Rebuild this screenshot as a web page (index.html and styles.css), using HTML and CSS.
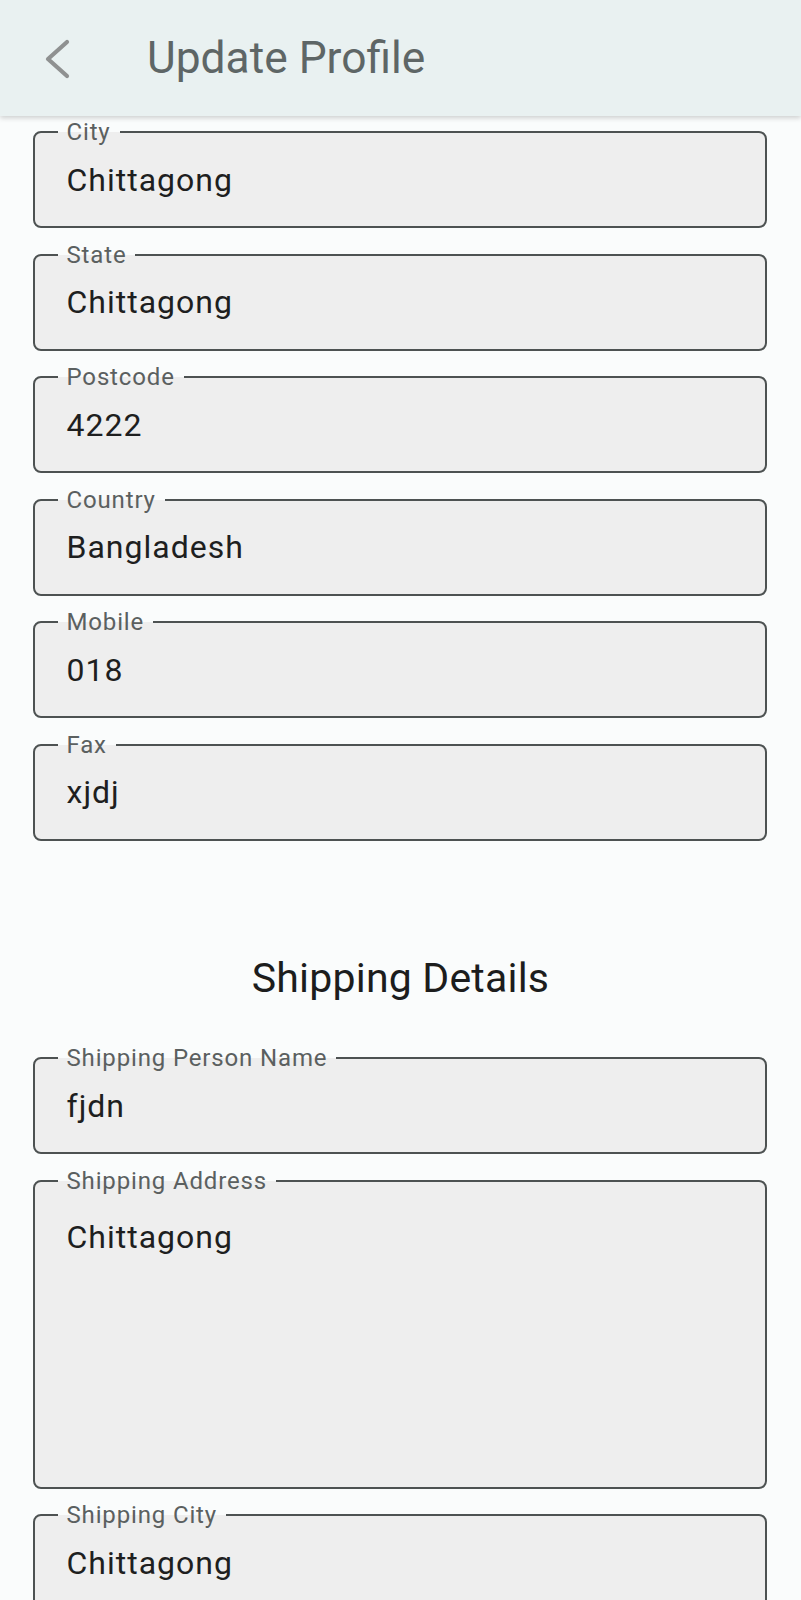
FILE: index.html
```html
<!DOCTYPE html>
<html lang="en">
<head>
<meta charset="utf-8">
<title>Update Profile</title>
<link rel="stylesheet" href="styles.css">
</head>
<body>
<div class="screen">
  <header class="appbar">
    <svg class="back" width="30" height="44" viewBox="0 0 30 44" aria-hidden="true">
      <path d="M25 6 L6 23 L25 40" fill="none" stroke="#8f9191" stroke-width="4.2" stroke-linecap="round" stroke-linejoin="round"/>
    </svg>
    <h1 class="appbar-title">Update Profile</h1>
  </header>
  <main class="content">
    <div class="form">
      <div class="field"><span class="label">City</span><span class="value">Chittagong</span></div>
      <div class="field"><span class="label">State</span><span class="value">Chittagong</span></div>
      <div class="field"><span class="label">Postcode</span><span class="value">4222</span></div>
      <div class="field"><span class="label">Country</span><span class="value">Bangladesh</span></div>
      <div class="field"><span class="label">Mobile</span><span class="value">018</span></div>
      <div class="field"><span class="label">Fax</span><span class="value">xjdj</span></div>
    </div>
    <h2 class="section-title">Shipping Details</h2>
    <div class="form">
      <div class="field"><span class="label">Shipping Person Name</span><span class="value">fjdn</span></div>
      <div class="field field-multi"><span class="label">Shipping Address</span><span class="value">Chittagong</span></div>
      <div class="field"><span class="label">Shipping City</span><span class="value">Chittagong</span></div>
    </div>
  </main>
</div>
</body>
</html>
```

FILE: styles.css
```css
* { box-sizing: border-box; }

html, body {
  margin: 0;
  padding: 0;
  background: #fafcfc;
  font-family: Roboto, "Noto Sans", "Liberation Sans", sans-serif;
}

.screen {
  height: 1600px;
  overflow: hidden;
  display: flex;
  flex-direction: column;
}

.appbar {
  flex: none;
  height: 116px;
  background: #e9f1f1;
  display: flex;
  align-items: center;
  padding-left: 42px;
  box-shadow: 0 2px 5px rgba(0, 0, 0, 0.18);
  position: relative;
  z-index: 2;
}

.back {
  display: block;
  flex: none;
}

.appbar-title {
  margin: 0 0 0 75px;
  font-size: 44.3px;
  font-weight: 400;
  color: #5e6666;
  line-height: 52px;
}

.content {
  flex: 1;
  overflow: hidden;
}

.form {
  display: flex;
  flex-direction: column;
  gap: 25.5px;
  padding: 0 34px 0 33px;
}

.content > .form:first-child {
  padding-top: 15px;
}

.field {
  position: relative;
  height: 97px;
  border: 2px solid #4d5252;
  border-radius: 8px;
  background: #eeeeee;
  display: flex;
  align-items: center;
  padding-left: 31.5px;
}

.field-multi {
  height: 309px;
  align-items: flex-start;
  padding-top: 36.7px;
}

.label {
  position: absolute;
  left: 22.5px;
  top: -15px;
  padding: 0 9px;
  font-size: 24px;
  line-height: 28px;
  letter-spacing: 0.85px;
  color: #5b6060;
  background: linear-gradient(to bottom, #fafcfc 0, #fafcfc 14px, #eeeeee 14px, #eeeeee 100%);
  white-space: nowrap;
}

.value {
  font-size: 32px;
  line-height: 38px;
  letter-spacing: 1px;
  color: #1e1f1f;
}

.section-title {
  margin: 113px 0 55.5px;
  text-align: center;
  font-size: 41px;
  line-height: 48px;
  font-weight: 400;
  letter-spacing: 0.2px;
  color: #1c1d1d;
}
```
